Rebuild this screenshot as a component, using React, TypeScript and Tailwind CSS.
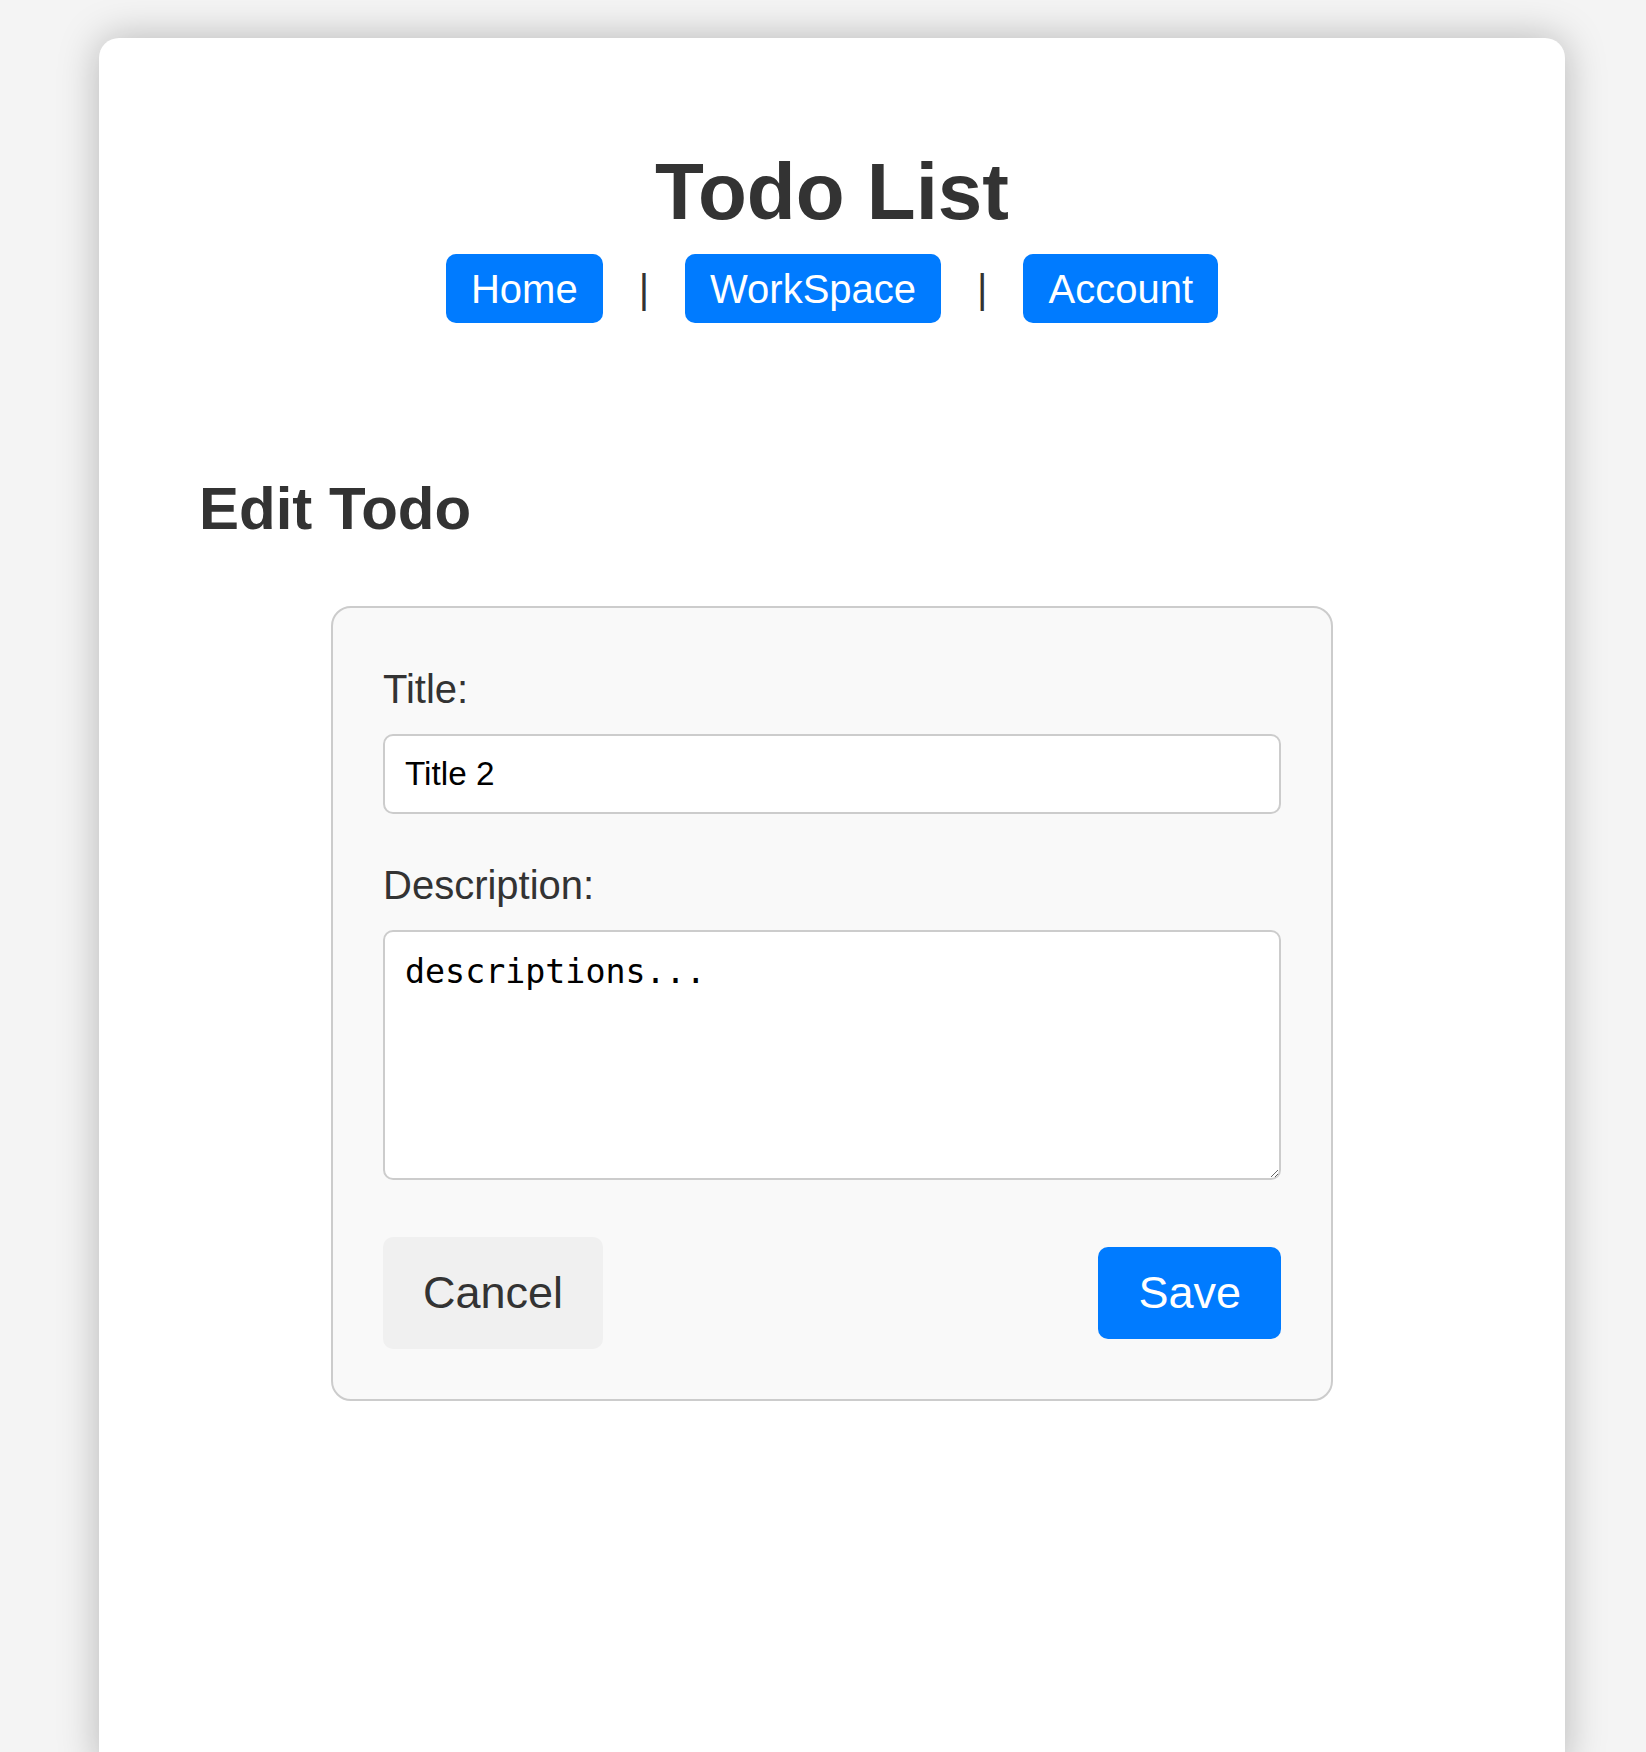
import React from "react";

export default function App() {
  const sans = { fontFamily: '"Liberation Sans", Arial, sans-serif' };
  return (
    <div
      className="w-[1646px] h-[1752px] overflow-hidden bg-[#f4f4f4] pt-[38px] pl-[99px]"
      style={sans}
    >
      <div className="w-[1466px] h-[1734px] bg-white rounded-[20px] shadow-[0_0_40px_rgba(0,0,0,0.26)] pt-[108px] px-[100px]">
        <h1 className="text-[80px] leading-[92px] font-bold text-center text-[#333]">
          Todo List
        </h1>
        <nav className="mt-[16px] flex justify-center items-center gap-[36px] text-[40px] leading-[46px]">
          <a className="h-[69px] px-[25px] rounded-[10px] bg-[#007bff] text-white flex items-center">
            Home
          </a>
          <span className="text-[#333]">|</span>
          <a className="h-[69px] px-[25px] rounded-[10px] bg-[#007bff] text-white flex items-center">
            WorkSpace
          </a>
          <span className="text-[#333]">|</span>
          <a className="h-[69px] px-[25px] rounded-[10px] bg-[#007bff] text-white flex items-center">
            Account
          </a>
        </nav>
        <h2 className="mt-[151px] text-[60px] leading-[69px] font-bold text-[#333]">
          Edit Todo
        </h2>
        <div className="mt-[63px] mx-auto w-[1002px] border-2 border-[#ccc] rounded-[20px] bg-[#f9f9f9] pt-[58px] pb-[50px] px-[50px] flex flex-col">
          <label className="text-[40px] leading-[46px] text-[#333]">Title:</label>
          <input
            type="text"
            defaultValue="Title 2"
            className="mt-[22px] w-full h-[80px] border-2 border-[#ccc] rounded-[10px] bg-white px-[20px] text-[33.3px] text-black outline-none"
            style={sans}
          />
          <label className="mt-[48px] text-[40px] leading-[46px] text-[#333]">Description:</label>
          <textarea
            defaultValue="descriptions..."
            className="mt-[22px] w-full h-[250px] border-2 border-[#ccc] rounded-[10px] bg-white px-[20px] pt-[15px] pb-[20px] text-[33.3px] text-black outline-none"
            style={{ fontFamily: '"DejaVu Sans Mono", monospace' }}
          />
          <div className="mt-[57px] flex justify-between items-center">
            <button className="h-[112px] px-[40px] rounded-[10px] bg-[#f0f0f0] text-[#333] text-[45px] leading-[52px]">
              Cancel
            </button>
            <button className="h-[92px] px-[40px] rounded-[10px] bg-[#007bff] text-white text-[45px] leading-[52px]">
              Save
            </button>
          </div>
        </div>
      </div>
    </div>
  );
}
